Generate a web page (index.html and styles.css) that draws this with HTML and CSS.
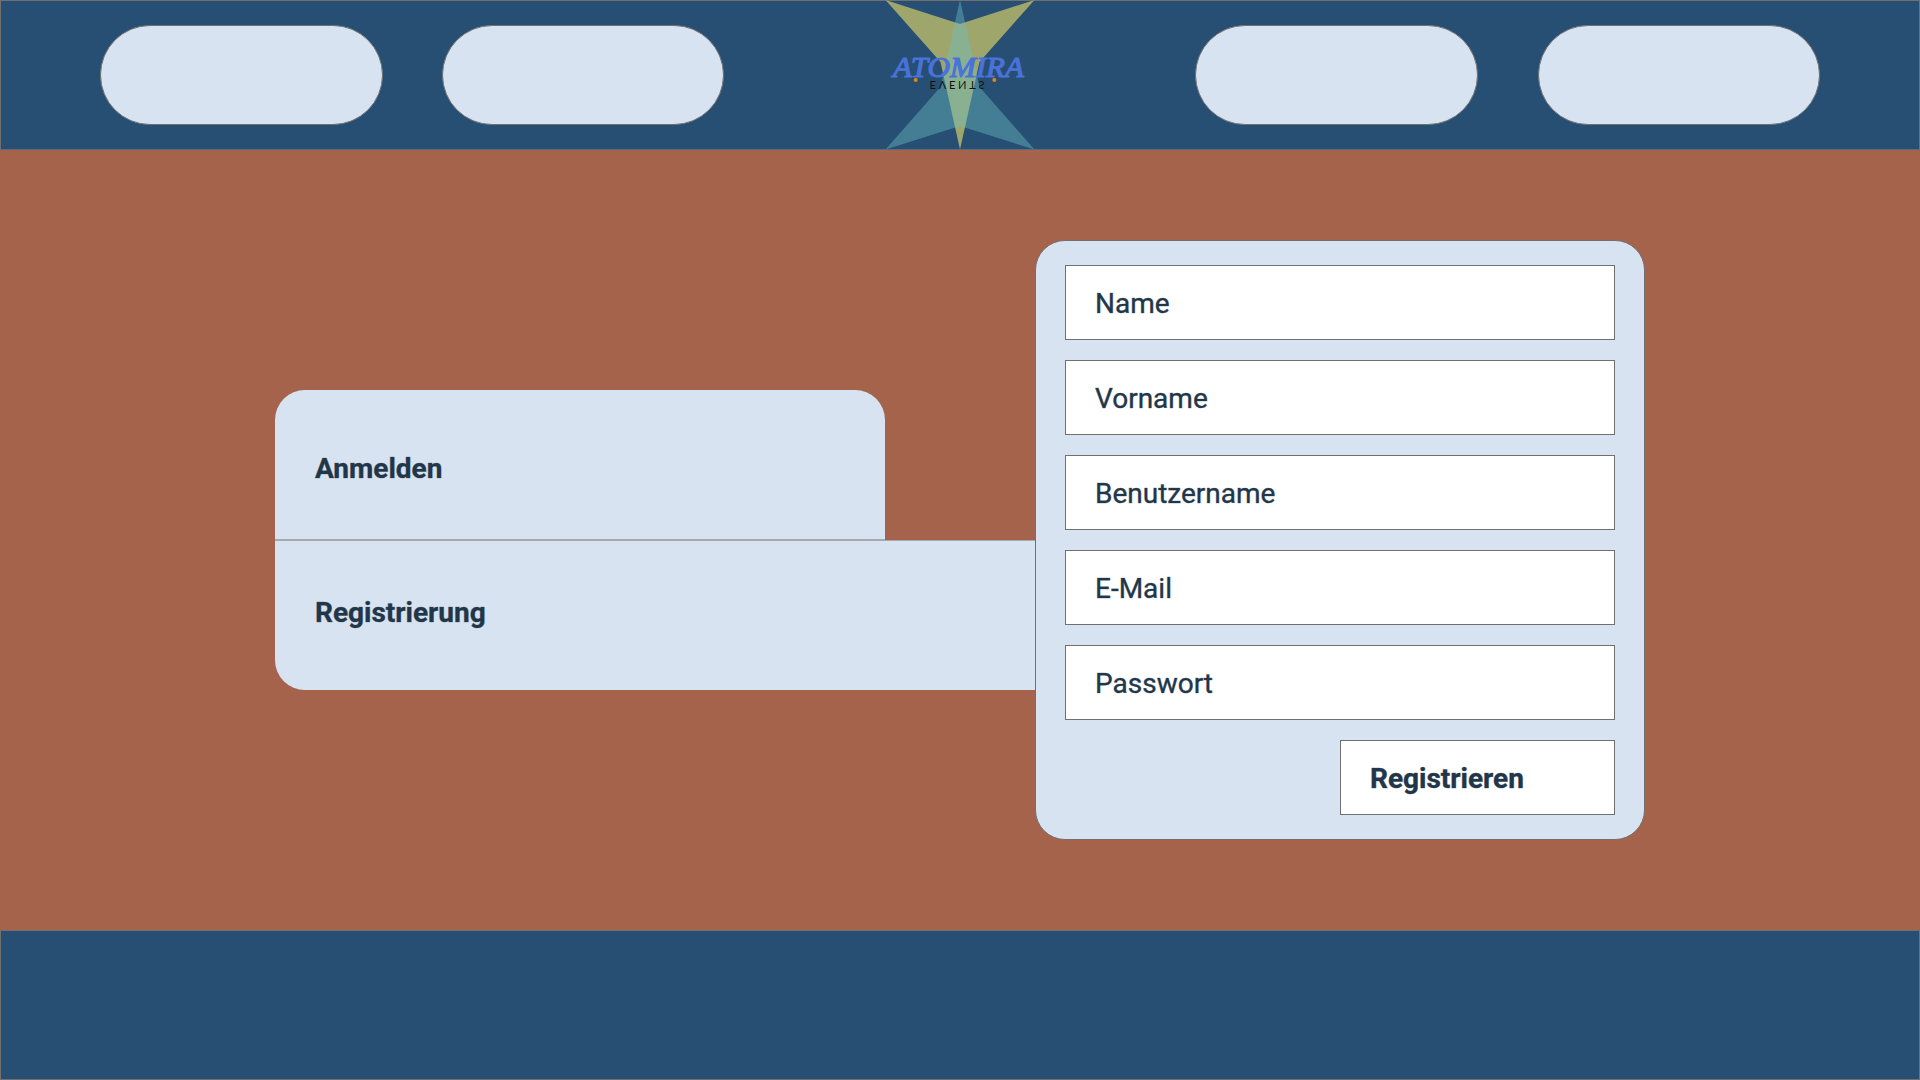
FILE: index.html
```html
<!DOCTYPE html>
<html lang="de">
<head>
<meta charset="utf-8">
<title>Atomira Events – Registrierung</title>
<link rel="stylesheet" href="styles.css">
</head>
<body>
<header class="bar header">
  <nav class="nav"><a class="pill"></a><a class="pill"></a></nav>
  <svg class="logo" viewBox="0 0 150 150" width="150" height="150">
    <polygon class="star-gold" points="0.5,0 75,24 149.5,0 94.5,62 75,149.5 55.5,62"/>
    <polygon class="star-teal" points="0.5,149.5 75,126 149.5,149.5 94.5,87 75,0 55.5,87"/>
    <text class="brand" x="8" y="77" textLength="131" lengthAdjust="spacingAndGlyphs">ATOMIRA</text>
    <text class="brand-sub" transform="translate(0 81) scale(1 -1)" x="44.5" y="0" textLength="55">EVENTS</text>
    <circle class="dot" cx="30.7" cy="80" r="2"/>
    <circle class="dot" cx="109.3" cy="80" r="2"/>
  </svg>
  <nav class="nav nav-right"><a class="pill"></a><a class="pill"></a></nav>
</header>
<main class="main">
  <section class="tabs">
    <div class="tab tab-login">Anmelden</div>
    <div class="tab tab-register">Registrierung</div>
  </section>
  <form class="card">
    <div class="field">Name</div>
    <div class="field">Vorname</div>
    <div class="field">Benutzername</div>
    <div class="field">E-Mail</div>
    <div class="field">Passwort</div>
    <div class="field submit">Registrieren</div>
  </form>
</main>
<footer class="bar footer"></footer>
</body>
</html>
```
FILE: styles.css
```css
* { box-sizing: border-box; }
body {
  margin: 0;
  width: 1920px;
  height: 1080px;
  display: flex;
  flex-direction: column;
  overflow: hidden;
  background: #a5634c;
  color: #20364a;
  font: 28px/36px Roboto, sans-serif;
  -webkit-text-stroke: .6px #8a8d90;
  paint-order: stroke fill;
}
.bar {
  flex: none;
  height: 150px;
  background: #274f73;
  border: 1px solid #707070;
}
.header {
  height: 149.5px;
  display: flex;
  justify-content: space-between;
  padding: 0 98.7px 0 99.3px;
  border-bottom-color: #5d6a76;
}
.nav { display: flex; gap: 59.5px; padding-top: 24px; }
.nav-right { gap: 60.3px; }
.pill {
  width: 282.3px;
  height: 100px;
  border: 1px solid #707070;
  border-radius: 50px;
  background: #d8e3f1;
}
.logo { display: block; margin-top: -1px; overflow: visible; }
.star-gold { fill: #9fa66b; }
.star-teal { fill: #6bc2c8; fill-opacity: .41; }
.brand {
  font: italic 30px "Liberation Serif", serif;
  fill: #4a72d8;
  stroke: #4a72d8;
  stroke-width: 1.2px;
  stroke-linejoin: round;
}
.brand-sub { font: 11px Lato, sans-serif; fill: #111; stroke: none; }
.dot { fill: #e8860c; }
.main {
  flex: none;
  height: 780.5px;
  display: flex;
  padding: 90.5px 275px 0;
}
.tabs { width: 760px; padding-top: 150px; }
.tab {
  height: 150px;
  padding-left: 40px;
  background: #d8e3f1;
  font-weight: 700;
}
.tab-login {
  width: 610px;
  padding-top: 61px;
  border-radius: 30px 30px 0 0;
  border-bottom: 1px solid #a5a9ae;
}
.tab-register {
  padding-top: 54px;
  border-radius: 0 0 0 30px;
  border-top: 1px solid #a5a9ae;
}
.card {
  width: 610px;
  height: 599.5px;
  display: flex;
  flex-direction: column;
  gap: 20px;
  padding: 24px 29px;
  background: #d8e3f1;
  border: 1px solid #707070;
  border-radius: 30px;
}
.field {
  height: 75px;
  flex: none;
  padding: 20px 29px;
  background: #fff;
  border: 1px solid #707070;
}
.submit { width: 275px; align-self: flex-end; font-weight: 700; }
```
